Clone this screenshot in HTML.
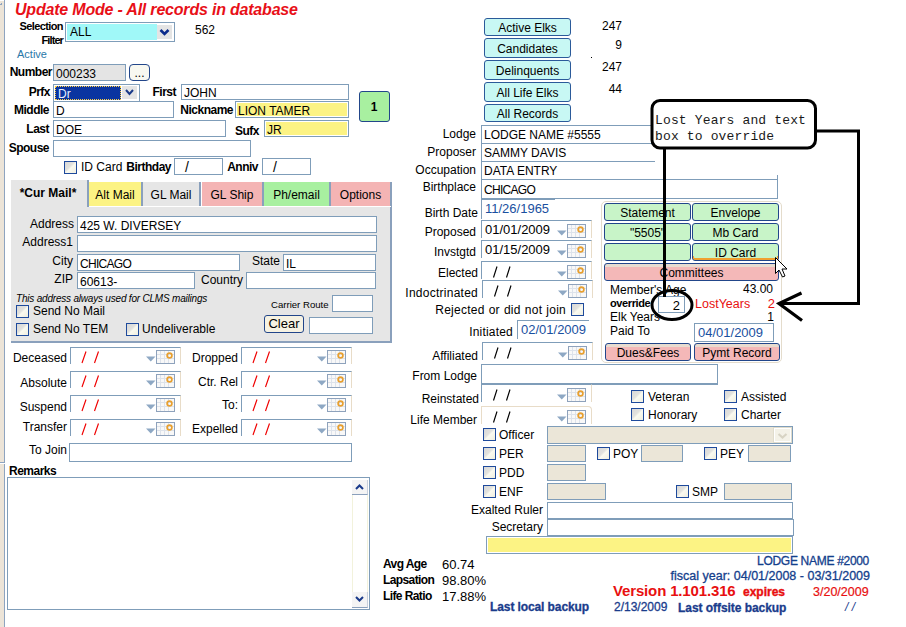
<!DOCTYPE html><html><head><meta charset="utf-8"><style>
*{margin:0;padding:0;box-sizing:border-box}
html,body{width:906px;height:627px;overflow:hidden;background:#fff;position:relative;font-family:"Liberation Sans",sans-serif;font-size:12px;color:#000}
div{position:absolute;white-space:nowrap}
.t{border:1px solid #7f9db9;background:#fff;font-size:12px;padding-left:2px;line-height:18px;overflow:hidden}
.l{font-size:12px;line-height:15px}
.b{font-weight:bold;font-size:12px;line-height:14px;letter-spacing:-0.5px}
.df{border-top:1px solid #7f9db9;border-left:1px solid #7f9db9;border-right:1px solid #e8dcc8;background:#fff}
.sl{top:1px;font-size:14px;line-height:17px;color:#f00000}
.dtx{left:3px;top:0px;font-size:13px;line-height:18px}
.cb{width:13px;height:13px;border:1px solid #1e4a9c;background:linear-gradient(135deg,#d8d8d8 0%,#e2e2de 42%,#fafaf0 55%,#efeee0 100%)}
.btn{border:1px solid #22468a;border-radius:3px;text-align:center;font-size:12px}
</style></head><body><div class="x" style="left:0px;top:0px;width:4px;height:627px;background:#ece4d8"></div>
<div class="x" style="left:4px;top:0px;width:1px;height:627px;background:#8ea4c0"></div>
<div class="x" style="left:0px;top:0px;width:4px;height:1px;background:#fff"></div>
<div style="left:0;top:3px;width:2px;height:2px;border-right:1px solid #8ea4c0;border-bottom:1px solid #8ea4c0"></div>
<div class="x" style="left:0px;top:462px;width:5px;height:1px;background:#8ea4c0"></div>
<div class="x" style="left:0px;top:463px;width:5px;height:1px;background:#fff"></div>
<div class="x" style="left:15px;top:1px;font:italic bold 16px/18px 'Liberation Sans',sans-serif;color:#e81018;letter-spacing:-0.2px">Update Mode - All records in database</div>
<div class="b" style="right:843px;top:19px;font-size:11px;letter-spacing:-0.6px">Selection</div>
<div class="b" style="right:843px;top:33px;font-size:11px;letter-spacing:-0.9px">Filter</div>
<div class="t" style="left:65px;top:22px;width:110px;height:20px;"></div>
<div style="left:67px;top:24px;width:90px;height:16px;background:#a0f8f8;line-height:17px;padding-left:3px">ALL</div>
<div style="left:157px;top:25px;width:15px;height:14px;background:#e4e4e4"><svg width="15" height="14"><path d="M3.5 5L7.5 9L11.5 5" fill="none" stroke="#0c2c8c" stroke-width="2.6"/></svg></div>
<div class="l" style="left:195px;top:23px;">562</div>
<div class="l" style="left:17px;top:47px;color:#2a78a8;font-size:11px">Active</div>
<div class="b" style="right:854px;top:65px;">Number</div>
<div class="t" style="left:53px;top:64px;width:73px;height:17px;background:#e4e4e4">000233</div>
<div class="btn" style="left:129px;top:64px;width:21px;height:17px;background:#f8f8f0;line-height:17px;line-height:16px;border-radius:4px">...</div>
<div class="b" style="right:856px;top:85px;">Prfx</div>
<div class="t" style="left:53px;top:84px;width:87px;height:18px;"></div>
<div style="left:55px;top:86px;width:66px;height:14px;background:#0a34a0;border:1px dotted #ffd040;color:#e8f0ff;line-height:14px;padding-left:2px">Dr</div>
<div style="left:122px;top:86px;width:15px;height:13px;background:#e4e4e4"><svg width="15" height="13"><path d="M4 4L7.5 8L11 4" fill="none" stroke="#1a3a8a" stroke-width="2"/></svg></div>
<div class="b" style="right:730px;top:85px;">First</div>
<div class="t" style="left:181px;top:84px;width:168px;height:16px;line-height:17px">JOHN</div>
<div class="b" style="right:673px;top:103px;">Nickname</div>
<div class="t" style="left:235px;top:101px;width:114px;height:17px;background:#fcf384;box-shadow:inset 0 0 0 1px #fff">LION TAMER</div>
<div class="b" style="right:857px;top:103px;">Middle</div>
<div class="t" style="left:53px;top:101px;width:121px;height:17px;">D</div>
<div class="b" style="right:857px;top:122px;">Last</div>
<div class="t" style="left:53px;top:120px;width:173px;height:17px;">DOE</div>
<div class="b" style="right:647px;top:124px;">Sufx</div>
<div class="t" style="left:264px;top:120px;width:85px;height:17px;background:#fcf384;box-shadow:inset 0 0 0 1px #fff">JR</div>
<div class="b" style="right:857px;top:141px;">Spouse</div>
<div class="t" style="left:53px;top:140px;width:198px;height:17px;"></div>
<div class="btn" style="left:359px;top:91px;width:31px;height:31px;background:#a8f0a0;line-height:31px;line-height:31px;border-radius:3px;padding-right:1px"><b>1</b></div>
<div class="cb" style="left:64px;top:161px"></div>
<div class="l" style="left:81px;top:160px;">ID Card</div>
<div class="b" style="right:735px;top:160px;">Birthday</div>
<div class="t" style="left:174px;top:158px;width:49px;height:17px;"><div style="left:10px;top:0;font-size:14px;line-height:16px">/</div></div>
<div class="b" style="right:648px;top:160px;">Anniv</div>
<div class="t" style="left:262px;top:158px;width:49px;height:17px;"><div style="left:10px;top:0;font-size:14px;line-height:16px">/</div></div>
<div class="x" style="left:11px;top:206px;width:381px;height:137px;background:#e6e6e6;border-right:2px solid #8aa0bc;border-bottom:2px solid #8aa0bc"></div>
<div style="left:11px;top:180px;width:78px;height:27px;background:#e6e6e6;border-right:2px solid #8aa0bc;text-align:center;line-height:27px;font-weight:bold;font-size:12px;padding-right:2px">*Cur Mail*</div>
<div style="left:89px;top:182px;width:54px;height:24px;background:#fcf384;border-right:2px solid #8aa0bc;text-align:center;line-height:26px;font-size:12px">Alt Mail</div>
<div style="left:143px;top:182px;width:58px;height:24px;background:#e6e6e6;border-right:2px solid #8aa0bc;text-align:center;line-height:26px;font-size:12px">GL Mail</div>
<div style="left:202px;top:182px;width:62px;height:24px;background:#f4b4b4;border-right:2px solid #8aa0bc;text-align:center;line-height:26px;font-size:12px">GL Ship</div>
<div style="left:264px;top:182px;width:67px;height:24px;background:#a8f0a0;border-right:2px solid #8aa0bc;text-align:center;line-height:26px;font-size:12px">Ph/email</div>
<div style="left:331px;top:182px;width:61px;height:24px;background:#f4b4b4;border-right:2px solid #8aa0bc;text-align:center;line-height:26px;font-size:12px">Options</div>
<div style="left:89px;top:206px;width:302px;height:1px;background:#fff"></div>
<div class="l" style="right:832px;top:217px;">Address</div>
<div class="t" style="left:77px;top:216px;width:300px;height:17px;">425 W. DIVERSEY</div>
<div class="l" style="right:833px;top:235px;">Address1</div>
<div class="t" style="left:77px;top:235px;width:300px;height:17px;"></div>
<div class="l" style="right:833px;top:254px;">City</div>
<div class="t" style="left:77px;top:254px;width:163px;height:17px;letter-spacing:-0.7px">CHICAGO</div>
<div class="l" style="right:626px;top:254px;">State</div>
<div class="t" style="left:283px;top:254px;width:93px;height:17px;">IL</div>
<div class="l" style="right:833px;top:272px;">ZIP</div>
<div class="t" style="left:77px;top:272px;width:118px;height:17px;">60613-</div>
<div class="l" style="right:663px;top:273px;">Country</div>
<div class="t" style="left:246px;top:272px;width:130px;height:17px;"></div>
<div class="x" style="left:16px;top:293px;font:italic 10px/12px 'Liberation Sans',sans-serif;letter-spacing:-0.2px">This address always used for CLMS mailings</div>
<div class="x" style="left:271px;top:299px;font:9.6px/12px 'Liberation Sans',sans-serif">Carrier Route</div>
<div class="t" style="left:332px;top:295px;width:41px;height:17px;"></div>
<div class="cb" style="left:16px;top:305px"></div>
<div class="l" style="left:33px;top:304px;">Send No Mail</div>
<div class="btn" style="left:264px;top:315px;width:40px;height:18px;background:#f6f2e2;line-height:18px;border-radius:3px;font-size:13px;line-height:16px">Clear</div>
<div class="t" style="left:309px;top:317px;width:64px;height:17px;"></div>
<div class="cb" style="left:16px;top:323px"></div>
<div class="l" style="left:33px;top:322px;">Send No TEM</div>
<div class="cb" style="left:126px;top:323px"></div>
<div class="l" style="left:142px;top:322px;">Undeliverable</div>
<div class="l" style="right:839px;top:351px;">Deceased</div>
<div class="df" style="left:70px;top:347px;width:111px;height:17px;"><svg width="40" height="17" style="position:absolute;left:0;top:0"><path d="M11 15L15 3.5M23.5 15L27.5 3.5" stroke="#f00000" stroke-width="1.15" fill="none"/></svg><svg width="19" height="14" style="position:absolute;left:85px;top:2px"><rect x="0.5" y="0.5" width="18" height="13" fill="#f8f8f8" stroke="#8ea2bc"/><path d="M4.5 1V13M8.5 1V13M12.5 1V13M1 4.5H18M1 8.5H18" stroke="#dde2ea" stroke-width="1"/><circle cx="13.5" cy="5.5" r="2.4" fill="none" stroke="#e8a030" stroke-width="1.7"/></svg><svg width="10" height="6" style="position:absolute;left:75px;top:8px"><path d="M0 0.5H9.5L4.75 5.5Z" fill="#8ea8c4"/></svg></div>
<div class="l" style="right:668px;top:351px;">Dropped</div>
<div class="df" style="left:241px;top:347px;width:111px;height:17px;"><svg width="40" height="17" style="position:absolute;left:0;top:0"><path d="M11 15L15 3.5M23.5 15L27.5 3.5" stroke="#f00000" stroke-width="1.15" fill="none"/></svg><svg width="19" height="14" style="position:absolute;left:85px;top:2px"><rect x="0.5" y="0.5" width="18" height="13" fill="#f8f8f8" stroke="#8ea2bc"/><path d="M4.5 1V13M8.5 1V13M12.5 1V13M1 4.5H18M1 8.5H18" stroke="#dde2ea" stroke-width="1"/><circle cx="13.5" cy="5.5" r="2.4" fill="none" stroke="#e8a030" stroke-width="1.7"/></svg><svg width="10" height="6" style="position:absolute;left:75px;top:8px"><path d="M0 0.5H9.5L4.75 5.5Z" fill="#8ea8c4"/></svg></div>
<div class="l" style="right:839px;top:376px;">Absolute</div>
<div class="df" style="left:70px;top:371px;width:111px;height:17px;"><svg width="40" height="17" style="position:absolute;left:0;top:0"><path d="M11 15L15 3.5M23.5 15L27.5 3.5" stroke="#f00000" stroke-width="1.15" fill="none"/></svg><svg width="19" height="14" style="position:absolute;left:85px;top:2px"><rect x="0.5" y="0.5" width="18" height="13" fill="#f8f8f8" stroke="#8ea2bc"/><path d="M4.5 1V13M8.5 1V13M12.5 1V13M1 4.5H18M1 8.5H18" stroke="#dde2ea" stroke-width="1"/><circle cx="13.5" cy="5.5" r="2.4" fill="none" stroke="#e8a030" stroke-width="1.7"/></svg><svg width="10" height="6" style="position:absolute;left:75px;top:8px"><path d="M0 0.5H9.5L4.75 5.5Z" fill="#8ea8c4"/></svg></div>
<div class="l" style="right:668px;top:375px;">Ctr. Rel</div>
<div class="df" style="left:241px;top:371px;width:111px;height:17px;"><svg width="40" height="17" style="position:absolute;left:0;top:0"><path d="M11 15L15 3.5M23.5 15L27.5 3.5" stroke="#f00000" stroke-width="1.15" fill="none"/></svg><svg width="19" height="14" style="position:absolute;left:85px;top:2px"><rect x="0.5" y="0.5" width="18" height="13" fill="#f8f8f8" stroke="#8ea2bc"/><path d="M4.5 1V13M8.5 1V13M12.5 1V13M1 4.5H18M1 8.5H18" stroke="#dde2ea" stroke-width="1"/><circle cx="13.5" cy="5.5" r="2.4" fill="none" stroke="#e8a030" stroke-width="1.7"/></svg><svg width="10" height="6" style="position:absolute;left:75px;top:8px"><path d="M0 0.5H9.5L4.75 5.5Z" fill="#8ea8c4"/></svg></div>
<div class="l" style="right:839px;top:400px;">Suspend</div>
<div class="df" style="left:70px;top:395px;width:111px;height:17px;"><svg width="40" height="17" style="position:absolute;left:0;top:0"><path d="M11 15L15 3.5M23.5 15L27.5 3.5" stroke="#f00000" stroke-width="1.15" fill="none"/></svg><svg width="19" height="14" style="position:absolute;left:85px;top:2px"><rect x="0.5" y="0.5" width="18" height="13" fill="#f8f8f8" stroke="#8ea2bc"/><path d="M4.5 1V13M8.5 1V13M12.5 1V13M1 4.5H18M1 8.5H18" stroke="#dde2ea" stroke-width="1"/><circle cx="13.5" cy="5.5" r="2.4" fill="none" stroke="#e8a030" stroke-width="1.7"/></svg><svg width="10" height="6" style="position:absolute;left:75px;top:8px"><path d="M0 0.5H9.5L4.75 5.5Z" fill="#8ea8c4"/></svg></div>
<div class="l" style="right:668px;top:398px;">To:</div>
<div class="df" style="left:241px;top:395px;width:111px;height:17px;"><svg width="40" height="17" style="position:absolute;left:0;top:0"><path d="M11 15L15 3.5M23.5 15L27.5 3.5" stroke="#f00000" stroke-width="1.15" fill="none"/></svg><svg width="19" height="14" style="position:absolute;left:85px;top:2px"><rect x="0.5" y="0.5" width="18" height="13" fill="#f8f8f8" stroke="#8ea2bc"/><path d="M4.5 1V13M8.5 1V13M12.5 1V13M1 4.5H18M1 8.5H18" stroke="#dde2ea" stroke-width="1"/><circle cx="13.5" cy="5.5" r="2.4" fill="none" stroke="#e8a030" stroke-width="1.7"/></svg><svg width="10" height="6" style="position:absolute;left:75px;top:8px"><path d="M0 0.5H9.5L4.75 5.5Z" fill="#8ea8c4"/></svg></div>
<div class="l" style="right:839px;top:420px;">Transfer</div>
<div class="df" style="left:70px;top:419px;width:111px;height:17px;"><svg width="40" height="17" style="position:absolute;left:0;top:0"><path d="M11 15L15 3.5M23.5 15L27.5 3.5" stroke="#f00000" stroke-width="1.15" fill="none"/></svg><svg width="19" height="14" style="position:absolute;left:85px;top:2px"><rect x="0.5" y="0.5" width="18" height="13" fill="#f8f8f8" stroke="#8ea2bc"/><path d="M4.5 1V13M8.5 1V13M12.5 1V13M1 4.5H18M1 8.5H18" stroke="#dde2ea" stroke-width="1"/><circle cx="13.5" cy="5.5" r="2.4" fill="none" stroke="#e8a030" stroke-width="1.7"/></svg><svg width="10" height="6" style="position:absolute;left:75px;top:8px"><path d="M0 0.5H9.5L4.75 5.5Z" fill="#8ea8c4"/></svg></div>
<div class="l" style="right:668px;top:422px;">Expelled</div>
<div class="df" style="left:241px;top:419px;width:111px;height:17px;"><svg width="40" height="17" style="position:absolute;left:0;top:0"><path d="M11 15L15 3.5M23.5 15L27.5 3.5" stroke="#f00000" stroke-width="1.15" fill="none"/></svg><svg width="19" height="14" style="position:absolute;left:85px;top:2px"><rect x="0.5" y="0.5" width="18" height="13" fill="#f8f8f8" stroke="#8ea2bc"/><path d="M4.5 1V13M8.5 1V13M12.5 1V13M1 4.5H18M1 8.5H18" stroke="#dde2ea" stroke-width="1"/><circle cx="13.5" cy="5.5" r="2.4" fill="none" stroke="#e8a030" stroke-width="1.7"/></svg><svg width="10" height="6" style="position:absolute;left:75px;top:8px"><path d="M0 0.5H9.5L4.75 5.5Z" fill="#8ea8c4"/></svg></div>
<div class="l" style="right:839px;top:443px;">To Join</div>
<div class="t" style="left:69px;top:443px;width:283px;height:19px;"></div>
<div class="b" style="left:9px;top:464px;">Remarks</div>
<div class="t" style="left:7px;top:477px;width:363px;height:133px;"></div>
<div style="left:352px;top:480px;width:16px;height:127px;background:#fff;border-left:1px solid #f2f2dc;border-right:1px solid #f2f2dc"></div>
<div style="left:352px;top:480px;width:16px;height:15px;background:#f4f4f4;border-bottom:1px solid #8aa0bc;border-right:1px solid #c8d0dc"><svg width="15" height="14"><path d="M4 9L7.5 5.5L11 9" fill="none" stroke="#1a3a8a" stroke-width="2"/></svg></div>
<div style="left:352px;top:592px;width:16px;height:16px;background:#f4f4f4;border-bottom:1px solid #8aa0bc;border-right:1px solid #c8d0dc"><svg width="15" height="14"><path d="M4 5L7.5 8.5L11 5" fill="none" stroke="#1a3a8a" stroke-width="2"/></svg></div>
<div class="btn" style="left:484px;top:18px;width:87px;height:18px;background:#c8f8f4;line-height:18px;border-color:#2b5a9a;line-height:19px">Active Elks</div>
<div class="btn" style="left:484px;top:38px;width:87px;height:20px;background:#c8f8f4;line-height:20px;border-color:#2b5a9a;line-height:21px">Candidates</div>
<div class="btn" style="left:484px;top:60px;width:87px;height:20px;background:#c8f8f4;line-height:20px;border-color:#2b5a9a;line-height:21px">Delinquents</div>
<div class="btn" style="left:484px;top:82px;width:87px;height:20px;background:#c8f8f4;line-height:20px;border-color:#2b5a9a;line-height:21px">All Life Elks</div>
<div class="btn" style="left:484px;top:104px;width:87px;height:18px;background:#c8f8f4;line-height:18px;border-color:#2b5a9a;line-height:19px">All Records</div>
<div class="l" style="right:284px;top:19px;">247</div>
<div class="l" style="right:284px;top:38px;">9</div>
<div class="l" style="right:284px;top:60px;">247</div>
<div class="l" style="right:284px;top:82px;">44</div>
<div class="l" style="right:430px;top:127px;">Lodge</div>
<div class="t" style="left:481px;top:125px;width:174px;height:19px;border-right:none;border-bottom:none">LODGE NAME #5555</div>
<div class="l" style="right:430px;top:145px;">Proposer</div>
<div class="t" style="left:481px;top:143px;width:174px;height:19px;border-right:none;border-bottom:none">SAMMY DAVIS</div>
<div class="l" style="right:430px;top:163px;">Occupation</div>
<div class="t" style="left:481px;top:161px;width:174px;height:19px;border-right:none;border-bottom:none">DATA ENTRY</div>
<div class="l" style="right:430px;top:180px;">Birthplace</div>
<div class="t" style="left:481px;top:179px;width:297px;height:20px;line-height:20px;letter-spacing:-0.7px">CHICAGO</div>
<div style="left:777px;top:175px;width:1px;height:5px;background:#7f9db9"></div>
<div style="left:591px;top:57px;width:1px;height:1px;background:#000"></div>
<div class="l" style="right:428px;top:206px;">Birth Date</div>
<div class="t" style="left:481px;top:198px;width:74px;height:21px;border-right:none;border-bottom:none;border-top-width:2px"></div>
<div class="l" style="left:485px;top:200px;font-size:13px;line-height:18px;color:#1a50a0">11/26/1965</div>
<div class="l" style="right:430px;top:225px;">Proposed</div>
<div class="df" style="left:481px;top:220px;width:111px;height:18px;"><div class="dtx">01/01/2009</div><svg width="19" height="14" style="position:absolute;left:85px;top:3px"><rect x="0.5" y="0.5" width="18" height="13" fill="#f8f8f8" stroke="#8ea2bc"/><path d="M4.5 1V13M8.5 1V13M12.5 1V13M1 4.5H18M1 8.5H18" stroke="#dde2ea" stroke-width="1"/><circle cx="13.5" cy="5.5" r="2.4" fill="none" stroke="#e8a030" stroke-width="1.7"/></svg><svg width="10" height="6" style="position:absolute;left:75px;top:9px"><path d="M0 0.5H9.5L4.75 5.5Z" fill="#8ea8c4"/></svg></div>
<div class="l" style="right:430px;top:245px;">Invstgtd</div>
<div class="df" style="left:481px;top:240px;width:111px;height:18px;"><div class="dtx">01/15/2009</div><svg width="19" height="14" style="position:absolute;left:85px;top:3px"><rect x="0.5" y="0.5" width="18" height="13" fill="#f8f8f8" stroke="#8ea2bc"/><path d="M4.5 1V13M8.5 1V13M12.5 1V13M1 4.5H18M1 8.5H18" stroke="#dde2ea" stroke-width="1"/><circle cx="13.5" cy="5.5" r="2.4" fill="none" stroke="#e8a030" stroke-width="1.7"/></svg><svg width="10" height="6" style="position:absolute;left:75px;top:9px"><path d="M0 0.5H9.5L4.75 5.5Z" fill="#8ea8c4"/></svg></div>
<div class="l" style="right:428px;top:266px;">Elected</div>
<div class="df" style="left:481px;top:261px;width:111px;height:18px;"><svg width="40" height="17" style="position:absolute;left:0;top:0"><path d="M11.5 15.5L15 4.5M24.5 15.5L28 4.5" stroke="#000" stroke-width="1.15" fill="none"/></svg><svg width="19" height="14" style="position:absolute;left:85px;top:3px"><rect x="0.5" y="0.5" width="18" height="13" fill="#f8f8f8" stroke="#8ea2bc"/><path d="M4.5 1V13M8.5 1V13M12.5 1V13M1 4.5H18M1 8.5H18" stroke="#dde2ea" stroke-width="1"/><circle cx="13.5" cy="5.5" r="2.4" fill="none" stroke="#e8a030" stroke-width="1.7"/></svg><svg width="10" height="6" style="position:absolute;left:75px;top:9px"><path d="M0 0.5H9.5L4.75 5.5Z" fill="#8ea8c4"/></svg></div>
<div class="l" style="right:428px;top:286px;letter-spacing:0.25px">Indoctrinated</div>
<div class="df" style="left:482px;top:280px;width:111px;height:18px;"><svg width="40" height="17" style="position:absolute;left:0;top:0"><path d="M11.5 15.5L15 4.5M24.5 15.5L28 4.5" stroke="#000" stroke-width="1.15" fill="none"/></svg><svg width="19" height="14" style="position:absolute;left:85px;top:3px"><rect x="0.5" y="0.5" width="18" height="13" fill="#f8f8f8" stroke="#8ea2bc"/><path d="M4.5 1V13M8.5 1V13M12.5 1V13M1 4.5H18M1 8.5H18" stroke="#dde2ea" stroke-width="1"/><circle cx="13.5" cy="5.5" r="2.4" fill="none" stroke="#e8a030" stroke-width="1.7"/></svg><svg width="10" height="6" style="position:absolute;left:75px;top:9px"><path d="M0 0.5H9.5L4.75 5.5Z" fill="#8ea8c4"/></svg></div>
<div class="l" style="right:340px;top:303px;letter-spacing:0.25px;word-spacing:0.5px">Rejected or did not join</div>
<div class="cb" style="left:571px;top:303px"></div>
<div class="l" style="right:393px;top:325px;letter-spacing:0.2px">Initiated</div>
<div class="t" style="left:517px;top:320px;width:72px;height:19px;border-right:none;border-bottom:none"></div>
<div class="l" style="left:521px;top:321px;font-size:13px;line-height:18px;color:#1a50a0">02/01/2009</div>
<div class="l" style="right:428px;top:349px;">Affiliated</div>
<div class="df" style="left:482px;top:342px;width:111px;height:18px;"><svg width="40" height="17" style="position:absolute;left:0;top:0"><path d="M11.5 15.5L15 4.5M24.5 15.5L28 4.5" stroke="#000" stroke-width="1.15" fill="none"/></svg><svg width="19" height="14" style="position:absolute;left:85px;top:3px"><rect x="0.5" y="0.5" width="18" height="13" fill="#f8f8f8" stroke="#8ea2bc"/><path d="M4.5 1V13M8.5 1V13M12.5 1V13M1 4.5H18M1 8.5H18" stroke="#dde2ea" stroke-width="1"/><circle cx="13.5" cy="5.5" r="2.4" fill="none" stroke="#e8a030" stroke-width="1.7"/></svg><svg width="10" height="6" style="position:absolute;left:75px;top:9px"><path d="M0 0.5H9.5L4.75 5.5Z" fill="#8ea8c4"/></svg></div>
<div class="l" style="right:429px;top:369px;">From Lodge</div>
<div class="t" style="left:481px;top:364px;width:237px;height:21px;border-bottom-width:2px"></div>
<div class="l" style="right:427px;top:392px;">Reinstated</div>
<div class="df" style="left:481px;top:384px;width:111px;height:18px;"><svg width="40" height="17" style="position:absolute;left:0;top:0"><path d="M11.5 15.5L15 4.5M24.5 15.5L28 4.5" stroke="#000" stroke-width="1.15" fill="none"/></svg><svg width="19" height="14" style="position:absolute;left:85px;top:3px"><rect x="0.5" y="0.5" width="18" height="13" fill="#f8f8f8" stroke="#8ea2bc"/><path d="M4.5 1V13M8.5 1V13M12.5 1V13M1 4.5H18M1 8.5H18" stroke="#dde2ea" stroke-width="1"/><circle cx="13.5" cy="5.5" r="2.4" fill="none" stroke="#e8a030" stroke-width="1.7"/></svg><svg width="10" height="6" style="position:absolute;left:75px;top:9px"><path d="M0 0.5H9.5L4.75 5.5Z" fill="#8ea8c4"/></svg></div>
<div class="l" style="right:429px;top:413px;">Life Member</div>
<div class="df" style="left:481px;top:406px;width:111px;height:18px;border-top-color:#e8dcc8;border-left-color:#e8dcc8;border-top-right-radius:4px"><svg width="40" height="17" style="position:absolute;left:0;top:0"><path d="M11.5 15.5L15 4.5M24.5 15.5L28 4.5" stroke="#000" stroke-width="1.15" fill="none"/></svg><svg width="19" height="14" style="position:absolute;left:85px;top:3px"><rect x="0.5" y="0.5" width="18" height="13" fill="#f8f8f8" stroke="#8ea2bc"/><path d="M4.5 1V13M8.5 1V13M12.5 1V13M1 4.5H18M1 8.5H18" stroke="#dde2ea" stroke-width="1"/><circle cx="13.5" cy="5.5" r="2.4" fill="none" stroke="#e8a030" stroke-width="1.7"/></svg><svg width="10" height="6" style="position:absolute;left:75px;top:9px"><path d="M0 0.5H9.5L4.75 5.5Z" fill="#8ea8c4"/></svg></div>
<div class="cb" style="left:631px;top:390px"></div>
<div class="l" style="left:648px;top:390px;">Veteran</div>
<div class="cb" style="left:724px;top:390px"></div>
<div class="l" style="left:741px;top:390px;">Assisted</div>
<div class="cb" style="left:631px;top:408px"></div>
<div class="l" style="left:648px;top:408px;">Honorary</div>
<div class="cb" style="left:724px;top:408px"></div>
<div class="l" style="left:741px;top:408px;">Charter</div>
<div class="cb" style="left:483px;top:428px"></div>
<div class="l" style="left:499px;top:428px;">Officer</div>
<div class="t" style="left:547px;top:426px;width:246px;height:18px;background:#ebe6d8"></div>
<div style="left:774px;top:428px;width:17px;height:14px;background:#f4f2e8;border:1px solid #fff;box-shadow:0 0 0 1px #e0dccc"><svg width="15" height="12"><path d="M3.5 5L7.5 8.5L11.5 5" fill="none" stroke="#d8d4c4" stroke-width="2.2"/></svg></div>
<div class="cb" style="left:483px;top:447px"></div>
<div class="l" style="left:499px;top:447px;">PER</div>
<div class="t" style="left:547px;top:445px;width:39px;height:17px;background:#ebe6d8"></div>
<div class="cb" style="left:597px;top:447px"></div>
<div class="l" style="left:613px;top:447px;">POY</div>
<div class="t" style="left:641px;top:445px;width:42px;height:17px;background:#ebe6d8"></div>
<div class="cb" style="left:704px;top:447px"></div>
<div class="l" style="left:720px;top:447px;">PEY</div>
<div class="t" style="left:748px;top:445px;width:43px;height:17px;background:#ebe6d8"></div>
<div class="cb" style="left:483px;top:466px"></div>
<div class="l" style="left:499px;top:466px;">PDD</div>
<div class="t" style="left:547px;top:464px;width:39px;height:17px;background:#ebe6d8"></div>
<div class="cb" style="left:483px;top:485px"></div>
<div class="l" style="left:499px;top:485px;">ENF</div>
<div class="t" style="left:547px;top:483px;width:59px;height:17px;background:#ebe6d8"></div>
<div class="cb" style="left:676px;top:485px"></div>
<div class="l" style="left:692px;top:485px;">SMP</div>
<div class="t" style="left:724px;top:483px;width:68px;height:17px;background:#ebe6d8"></div>
<div class="l" style="right:363px;top:503px;">Exalted Ruler</div>
<div class="t" style="left:547px;top:502px;width:246px;height:17px;"></div>
<div class="l" style="right:363px;top:520px;">Secretary</div>
<div class="t" style="left:547px;top:519px;width:247px;height:17px;"></div>
<div class="t" style="left:486px;top:536px;width:307px;height:18px;background:#fcf384;box-shadow:inset 0 0 0 1px #fff"></div>
<div class="x" style="left:601px;top:201px;width:181px;height:162px;border:1px solid #e4dccc;border-radius:5px;background:#fff"></div>
<div class="btn" style="left:604px;top:203px;width:87px;height:18px;background:#c8f4c8;line-height:18px;">Statement</div>
<div class="btn" style="left:692px;top:203px;width:87px;height:18px;background:#c8f4c8;line-height:18px;">Envelope</div>
<div class="btn" style="left:604px;top:223px;width:87px;height:18px;background:#c8f4c8;line-height:18px;">"5505"</div>
<div class="btn" style="left:692px;top:223px;width:87px;height:18px;background:#c8f4c8;line-height:18px;">Mb Card</div>
<div class="btn" style="left:604px;top:243px;width:87px;height:18px;background:#c8f4c8;line-height:18px;"></div>
<div class="btn" style="left:692px;top:243px;width:87px;height:18px;background:#c8f4c8;line-height:18px;box-shadow:inset 0 -2px 0 #f0a030">ID Card</div>
<div style="left:693px;top:256px;width:1px;height:3px;background:#f0a030"></div><div style="left:777px;top:256px;width:1px;height:3px;background:#f0a030"></div>
<div class="btn" style="left:604px;top:263px;width:175px;height:18px;background:#f4b8b8;line-height:18px;background:linear-gradient(#e8dcd0 0,#e8dcd0 3px,#f4b8b8 3px)">Committees</div>
<div class="l" style="left:610px;top:283px;">Member's Age</div>
<div class="l" style="right:133px;top:282px;">43.00</div>
<div class="x" style="left:610px;top:297px;font:bold 11px/13px 'Liberation Sans',sans-serif;letter-spacing:-0.4px">override</div>
<div class="t" style="left:658px;top:296px;width:27px;height:17px;text-align:right;padding-right:4px;font-size:13px;line-height:18px">2</div>
<div class="l" style="left:695px;top:297px;color:#e81010;font-size:12.5px">LostYears</div>
<div class="l" style="right:131px;top:296px;color:#e81010;font-size:13px">2</div>
<div class="l" style="left:610px;top:310px;">Elk Years</div>
<div class="l" style="right:132px;top:310px;">1</div>
<div class="l" style="left:610px;top:324px;">Paid To</div>
<div class="t" style="left:694px;top:323px;width:80px;height:19px;font-size:13px;padding-left:3px"><span style="color:#1a50a0">04/01/2009</span></div>
<div class="btn" style="left:605px;top:343px;width:86px;height:18px;background:#f4b8b8;line-height:18px;background:linear-gradient(#e8dcd0 0,#e8dcd0 3px,#f4b8b8 3px)">Dues&amp;Fees</div>
<div class="btn" style="left:694px;top:343px;width:86px;height:18px;background:#f4b8b8;line-height:18px;background:linear-gradient(#e8dcd0 0,#e8dcd0 3px,#f4b8b8 3px)">Pymt Record</div>
<svg width="906" height="627" style="position:absolute;left:0;top:0"><rect x="652" y="100.5" width="163.5" height="47.5" rx="8" fill="#fff" stroke="#000" stroke-width="3"/><path d="M664.5 149V297" stroke="#000" stroke-width="3" fill="none"/><path d="M816 131H858.5V303.5H779" stroke="#000" stroke-width="3" fill="none"/><path d="M801.5 293L779 303.5L802 320.5" stroke="#000" stroke-width="3.2" fill="none" stroke-linejoin="miter"/><ellipse cx="672" cy="305" rx="20" ry="14.5" fill="none" stroke="#000" stroke-width="3"/><path d="M775.5 257.5V273.5L779 270L782.5 277L785 276L782 269L787 269Z" fill="#fff" stroke="#000" stroke-width="1"/></svg>
<div class="x" style="left:655px;top:113px;font:13px/16px 'Liberation Mono',monospace;color:#1a1a1a;letter-spacing:0.15px">Lost Years and text</div>
<div class="x" style="left:655px;top:129px;font:13px/16px 'Liberation Mono',monospace;color:#1a1a1a;letter-spacing:0.15px">box to override</div>
<div class="b" style="left:383px;top:557px;font-size:12px;letter-spacing:-0.6px">Avg Age</div>
<div class="l" style="left:442px;top:557px;font-size:13px">60.74</div>
<div class="b" style="left:383px;top:573px;font-size:12px;letter-spacing:-0.6px">Lapsation</div>
<div class="l" style="left:442px;top:573px;font-size:13px">98.80%</div>
<div class="b" style="left:383px;top:589px;font-size:12px;letter-spacing:-0.6px">Life Ratio</div>
<div class="l" style="left:442px;top:589px;font-size:13px">17.88%</div>
<div class="b" style="left:490px;top:600px;font-size:12px;letter-spacing:-0.1px;color:#1a3c8c;-webkit-text-stroke:0.3px #1a3c8c">Last local backup</div>
<div class="l" style="left:614px;top:600px;color:#1a3c8c;-webkit-text-stroke:0.3px #1a3c8c">2/13/2009</div>
<div class="b" style="left:678px;top:601px;font-size:12px;letter-spacing:-0.05px;color:#1a3c8c;-webkit-text-stroke:0.3px #1a3c8c">Last offsite backup</div>
<div class="l" style="left:845px;top:600px;color:#1a3c8c;font-style:italic">/ /</div>
<div class="l" style="right:37px;top:554px;color:#14408c;letter-spacing:-0.3px;-webkit-text-stroke:0.3px #14408c">LODGE NAME #2000</div>
<div class="l" style="right:36px;top:569px;color:#14408c;font-size:12.5px;-webkit-text-stroke:0.3px #14408c">fiscal year: 04/01/2008 - 03/31/2009</div>
<div class="x" style="left:613px;top:582px;font:bold 15px/17px 'Liberation Sans',sans-serif;color:#e81010;letter-spacing:-0.15px">Version 1.101.316</div>
<div class="b" style="left:743px;top:585px;color:#e81010;font-size:12px;letter-spacing:0px;-webkit-text-stroke:0.4px #e81010">expires</div>
<div class="l" style="left:813px;top:585px;color:#e81010;font-size:12.5px;-webkit-text-stroke:0.2px #e81010">3/20/2009</div></body></html>
